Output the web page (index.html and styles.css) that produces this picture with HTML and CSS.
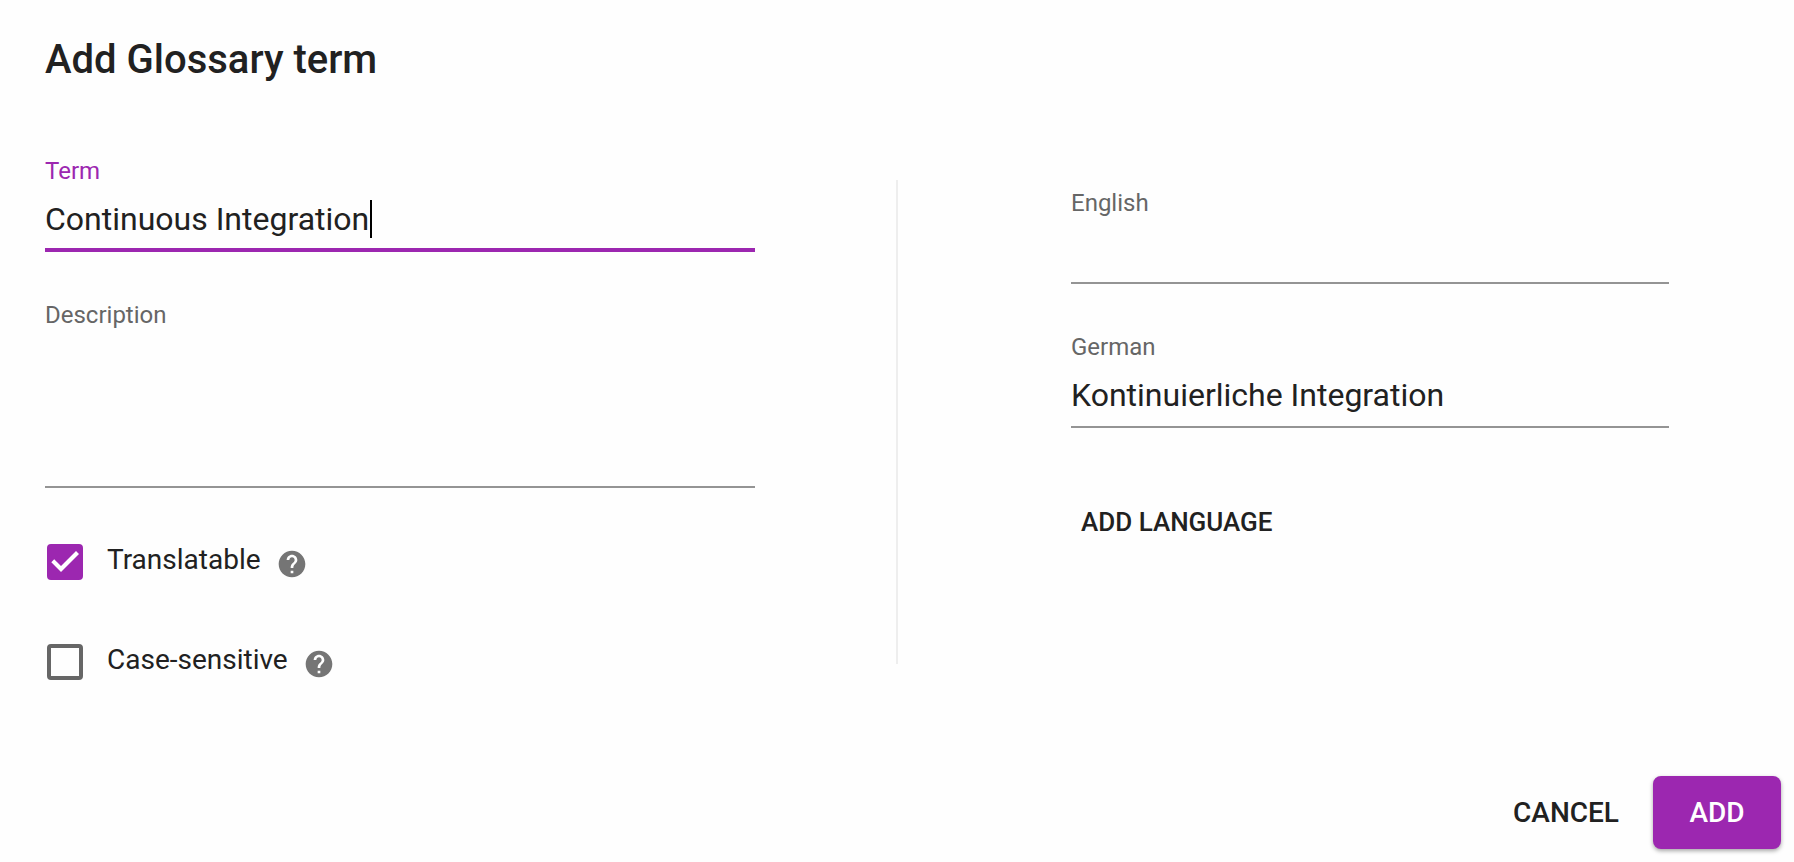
FILE: index.html
```html
<!DOCTYPE html>
<html lang="en">
<head>
<meta charset="utf-8">
<meta name="viewport" content="width=device-width, initial-scale=1">
<title>Add Glossary term</title>
<link rel="stylesheet" href="styles.css">
</head>
<body>
<form class="dialog">
  <h1 class="dialog-title">Add Glossary term</h1>

  <div class="dialog-content">
    <section class="pane pane-term">
      <div class="field field-active">
        <label class="field-label" for="term">Term</label>
        <div class="field-control">
          <input class="field-input" id="term" type="text" value="Continuous Integration">
          <span class="caret"></span>
        </div>
      </div>
      <div class="field">
        <label class="field-label" for="description">Description</label>
        <textarea class="field-input field-textarea" id="description"></textarea>
      </div>
      <div class="options">
        <div class="option">
          <span class="checkbox">
            <input class="checkbox-input" id="translatable" type="checkbox" checked>
            <svg class="checkbox-mark" viewBox="0 0 36 36" aria-hidden="true"><path d="M4.3 18.2 14 28 32 10l-3-3L14 22.1 7.2 15.3z"/></svg>
          </span>
          <label class="option-label" for="translatable">Translatable</label>
          <svg class="help" viewBox="0 0 24 24" role="img" aria-label="Help"><path d="M12 2C6.48 2 2 6.48 2 12s4.48 10 10 10 10-4.48 10-10S17.52 2 12 2zm1 17h-2v-2h2v2zm2.07-7.75l-.9.92C13.45 12.9 13 13.5 13 15h-2v-.5c0-1.1.45-2.1 1.17-2.83l1.24-1.26c.37-.36.59-.86.59-1.41 0-1.1-.9-2-2-2s-2 .9-2 2H8c0-2.21 1.79-4 4-4s4 1.79 4 4c0 .88-.36 1.68-.93 2.25z"/></svg>
        </div>
        <div class="option">
          <span class="checkbox">
            <input class="checkbox-input" id="case-sensitive" type="checkbox">
          </span>
          <label class="option-label" for="case-sensitive">Case-sensitive</label>
          <svg class="help" viewBox="0 0 24 24" role="img" aria-label="Help"><path d="M12 2C6.48 2 2 6.48 2 12s4.48 10 10 10 10-4.48 10-10S17.52 2 12 2zm1 17h-2v-2h2v2zm2.07-7.75l-.9.92C13.45 12.9 13 13.5 13 15h-2v-.5c0-1.1.45-2.1 1.17-2.83l1.24-1.26c.37-.36.59-.86.59-1.41 0-1.1-.9-2-2-2s-2 .9-2 2H8c0-2.21 1.79-4 4-4s4 1.79 4 4c0 .88-.36 1.68-.93 2.25z"/></svg>
        </div>
      </div>
    </section>

    <div class="divider"></div>

    <section class="pane pane-languages">
      <div class="field">
        <label class="field-label" for="english">English</label>
        <input class="field-input" id="english" type="text">
      </div>
      <div class="field">
        <label class="field-label" for="german">German</label>
        <input class="field-input" id="german" type="text" value="Kontinuierliche Integration">
      </div>
      <button class="button button-small" type="button">ADD LANGUAGE</button>
    </section>
  </div>

  <div class="dialog-actions">
    <button class="button" type="button">CANCEL</button>
    <button class="button button-primary" type="submit">ADD</button>
  </div>
</form>
</body>
</html>
```
FILE: styles.css
```css
:root {
  --primary: #9c27b0;
  --text: #212121;
  --muted: #666;
  --line: #949494;
}

* {
  box-sizing: border-box;
}

body {
  margin: 0;
  background: #fefefe;
  color: var(--text);
  font-family: Roboto, sans-serif;
}

.dialog-title {
  margin: 0;
  padding: 36px 45px 0;
  font-size: 40px;
  font-weight: 500;
  line-height: 48px;
}

.dialog-content {
  display: grid;
  grid-template-columns: 1fr 2px 1fr;
  padding-top: 73px;
}

.pane {
  display: flex;
  flex-direction: column;
  gap: 49px;
}

.pane-term {
  padding: 0 141px 0 45px;
}

.pane-languages {
  padding: 32px 125px 0 173px;
}

.divider {
  margin: 23px 0 16px;
  background: #eee;
}

.field {
  display: flex;
  flex-direction: column;
}

.field-label {
  color: var(--muted);
  font-size: 24px;
  line-height: 28px;
}

.field-control {
  position: relative;
  display: flex;
}

.field-input {
  width: 100%;
  height: 67px;
  padding: 15px 0 12px;
  border: 0;
  border-bottom: 2px solid var(--line);
  border-radius: 0;
  outline: 0;
  background: transparent;
  color: inherit;
  font: 32px/38px Roboto, sans-serif;
}

.field-textarea {
  display: block;
  height: 159px;
  resize: none;
}

.field-active .field-label {
  color: var(--primary);
}

.field-active .field-input {
  padding-bottom: 10px;
  border-bottom: 4px solid var(--primary);
}

.caret {
  position: absolute;
  top: 15px;
  left: 325px;
  width: 2px;
  height: 38px;
  background: #000;
}

.options {
  display: flex;
  flex-direction: column;
  gap: 64px;
  padding: 7px 0 0 2px;
}

.option {
  display: flex;
  align-items: center;
  height: 36px;
}

.checkbox {
  position: relative;
  display: flex;
  margin-right: 24px;
}

.checkbox-input {
  width: 36px;
  height: 36px;
  margin: 0;
  border: 4px solid var(--muted);
  border-radius: 4px;
  appearance: none;
}

.checkbox-input:checked {
  border-color: var(--primary);
  background: var(--primary);
}

.checkbox-mark {
  position: absolute;
  inset: 0;
  fill: #fff;
  pointer-events: none;
}

.option-label {
  padding-bottom: 4px;
  font-size: 28px;
  line-height: 32px;
}

.help {
  width: 32px;
  height: 32px;
  margin: 4px 0 0 15px;
  fill: #757575;
}

.button {
  min-width: 128px;
  padding: 20px 34px;
  border: 0;
  border-radius: 8px;
  background: transparent;
  color: inherit;
  font: 500 28px/33px Roboto, sans-serif;
}

.button-small {
  align-self: flex-start;
  margin-top: 21px;
  padding: 8px 10px;
  font-size: 26px;
  line-height: 32px;
}

.button-primary {
  background: var(--primary);
  box-shadow: 0 2px 4px rgba(0, 0, 0, 0.35);
  color: #fff;
}

.dialog-actions {
  display: flex;
  justify-content: flex-end;
  padding: 96px 13px 13px;
}
```
